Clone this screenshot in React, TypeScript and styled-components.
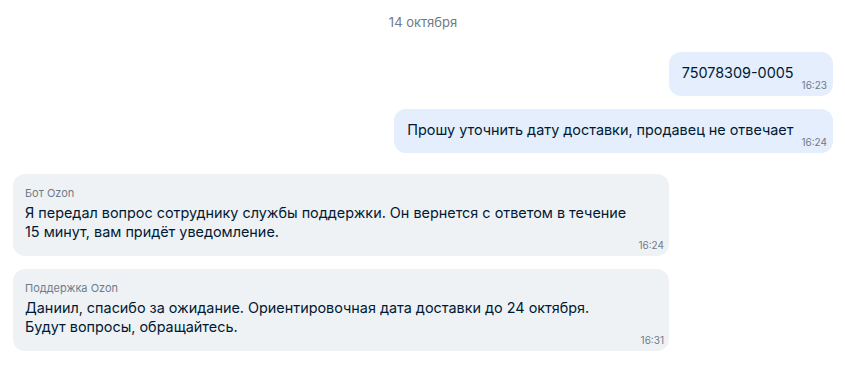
import styled, { createGlobalStyle } from 'styled-components';

const GlobalStyle = createGlobalStyle`
  body {
    margin: 0;
    background: #ffffff;
    font-family: Inter, "Noto Sans", sans-serif;
    color: #001a34;
  }
`;

type Message = {
  id: number;
  out: boolean;
  sender?: string;
  text: string;
  time: string;
};

const messages: Message[] = [
  { id: 1, out: true, text: '75078309-0005', time: '16:23' },
  {
    id: 2,
    out: true,
    text: 'Прошу уточнить дату доставки, продавец не отвечает',
    time: '16:24',
  },
  {
    id: 3,
    out: false,
    sender: 'Бот Ozon',
    text: 'Я передал вопрос сотруднику службы поддержки. Он вернется с ответом в течение 15 минут, вам придёт уведомление.',
    time: '16:24',
  },
  {
    id: 4,
    out: false,
    sender: 'Поддержка Ozon',
    text: 'Даниил, спасибо за ожидание. Ориентировочная дата доставки до 24 октября. Будут вопросы, обращайтесь.',
    time: '16:31',
  },
];

const App = () => {
  return (
    <>
      <GlobalStyle />
      <Chat>
        <DateLabel>14 октября</DateLabel>
        {messages.map((m, i) => {
          const prev = messages[i - 1];
          const switched = prev ? prev.out !== m.out : false;
          return (
            <Row key={m.id} $out={m.out} $first={i === 0} $switched={switched}>
              <Bubble $out={m.out}>
                {m.sender && <Sender>{m.sender}</Sender>}
                <Text $out={m.out}>{m.text}</Text>
                <Time>{m.time}</Time>
              </Bubble>
            </Row>
          );
        })}
      </Chat>
    </>
  );
};

export default App;

const Chat = styled.div`
  display: flex;
  flex-direction: column;
  padding: 13px 12px 12px 13px;
`;

const DateLabel = styled.div`
  align-self: center;
  font-size: 13px;
  line-height: 18px;
  color: #6f7b88;
`;

const Row = styled.div<{ $out: boolean; $first: boolean; $switched: boolean }>`
  display: flex;
  justify-content: ${(p) => (p.$out ? 'flex-end' : 'flex-start')};
  margin-top: ${(p) => (p.$first ? '21px' : p.$switched ? '21px' : '13px')};
`;

const Bubble = styled.div<{ $out: boolean }>`
  max-width: 80%;
  box-sizing: border-box;
  display: flex;
  flex-wrap: wrap;
  align-items: flex-end;
  border-radius: 12px;
  background: ${(p) => (p.$out ? '#e5eefc' : '#eff2f5')};
  padding: ${(p) => (p.$out ? '11px 6px 4px 13px' : '11px 5px 4px 12px')};
`;

const Sender = styled.div`
  flex-basis: 100%;
  font-size: 11px;
  line-height: 16px;
  color: #6f7b88;
  margin-bottom: 2px;
`;

const Text = styled.div<{ $out: boolean }>`
  font-size: 14.4px;
  line-height: 19px;
  color: #001a34;
  margin-bottom: ${(p) => (p.$out ? '10px' : '-3px')};
  padding-right: ${(p) => (p.$out ? '0' : '32px')};
`;

const Time = styled.div`
  margin-left: auto;
  padding-left: 8px;
  font-size: 10px;
  line-height: 14px;
  color: #6f7b88;
`;
